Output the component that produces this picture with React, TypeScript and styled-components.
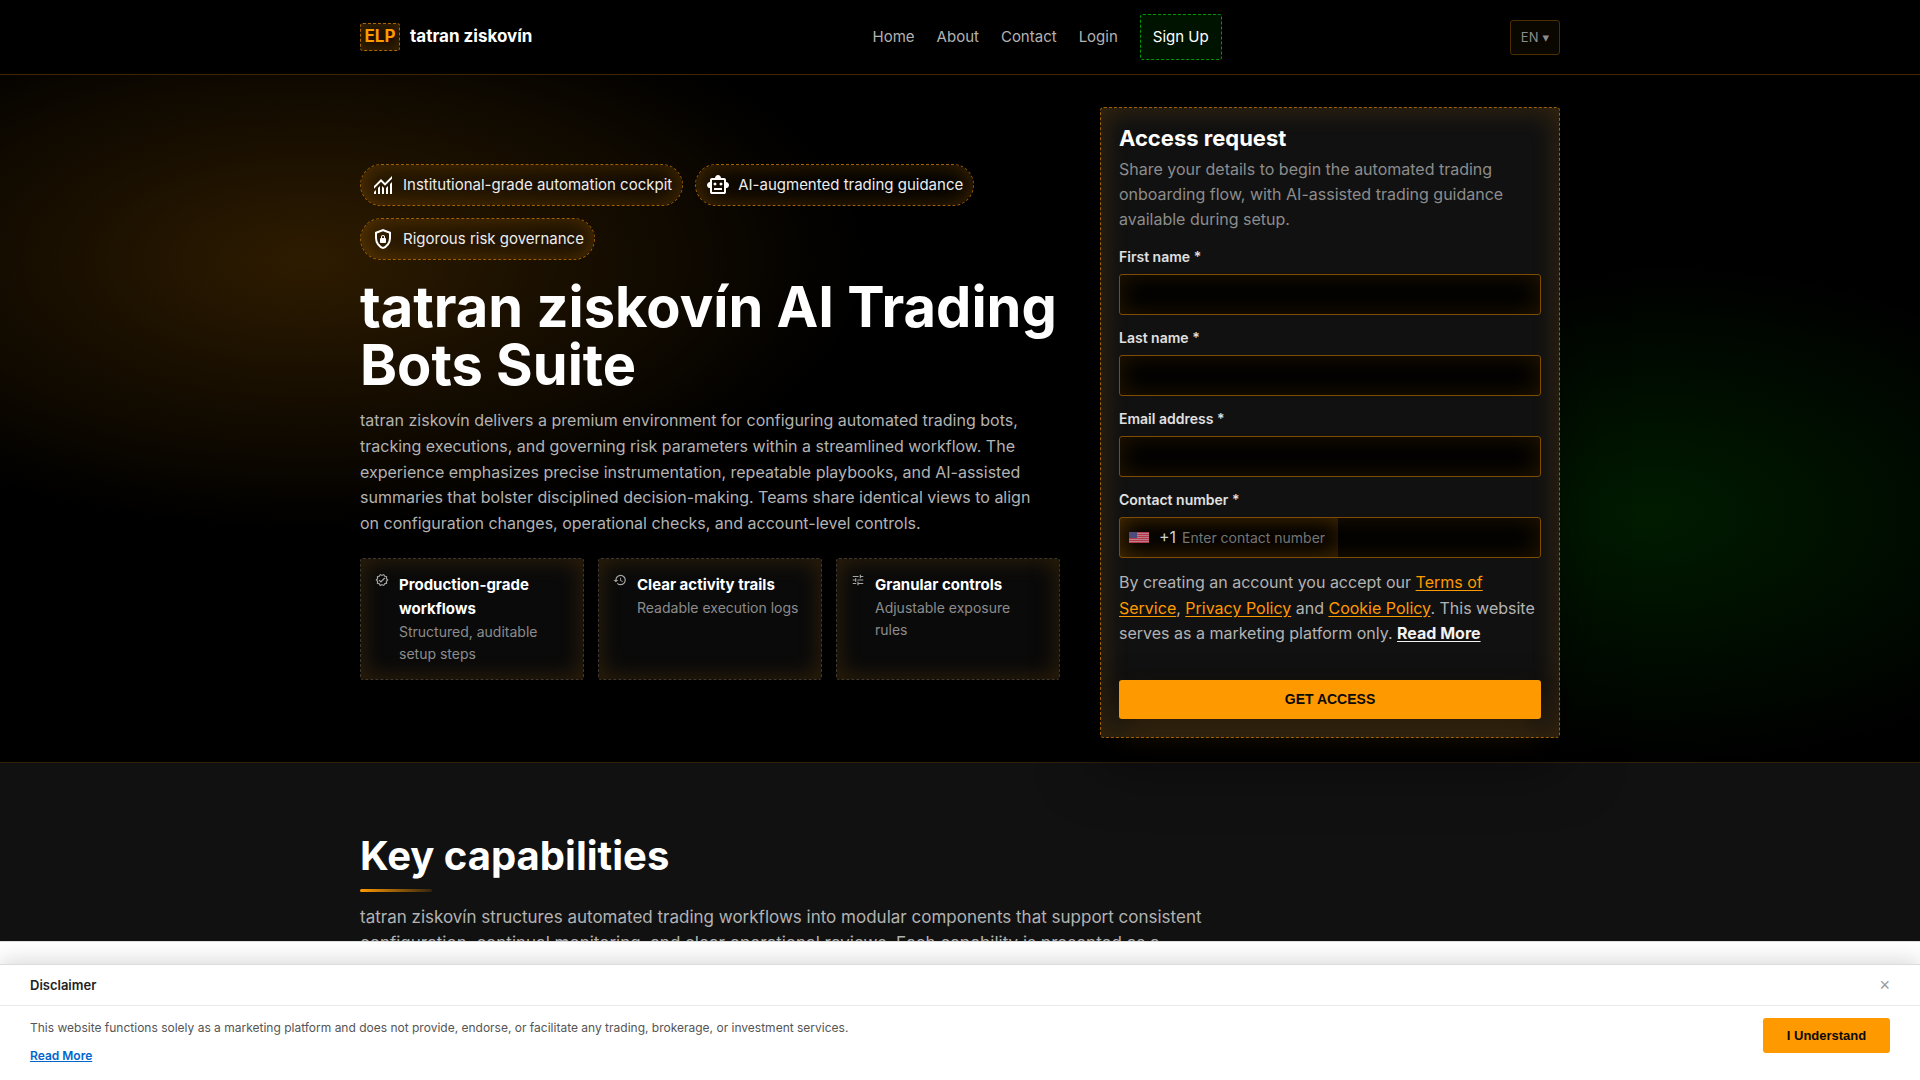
import React from "react";
import styled, { createGlobalStyle } from "styled-components";
import { MdHistory, MdOutlineVerified, MdTune } from "react-icons/md";

const GlobalStyle = createGlobalStyle`
  *, *::before, *::after { box-sizing: border-box; }
  body {
    margin: 0;
    background: #fff;
    color: #fff;
    font-family: Inter, "Liberation Sans", sans-serif;
    font-size: 16px;
    line-height: 1.6;
  }
  h1, h2, h3, p { margin: 0; }
`;

const Shell = styled.div`
  display: flex;
  flex-direction: column;
  height: 100vh;
`;

const Page = styled.div`
  flex: 1;
  min-height: 0;
  overflow: hidden auto;
  scrollbar-width: none;
  background: #111;
`;

const Container = styled.div`
  width: 100%;
  max-width: 1248px;
  margin: 0 auto;
  padding: 0 24px;
`;

const Header = styled.header`
  padding: 14px 0;
  background: #000;
  border-bottom: 1px solid #402600;
`;

const HeaderRow = styled(Container)`
  display: flex;
  align-items: center;
  justify-content: space-between;
`;

const Brand = styled.a`
  display: flex;
  align-items: center;
  gap: 10px;
  color: #fff;
  font-size: 17px;
  font-weight: 700;
  text-decoration: none;
`;

const BrandMark = styled.span`
  display: flex;
  align-items: center;
  justify-content: center;
  width: 40px;
  height: 28px;
  border: 1px dashed #a86500;
  border-radius: 3px;
  background: #1c1100;
  box-shadow: inset 0 0 12px rgba(255, 153, 0, 0.16);
  color: #f90;
`;

const Nav = styled.nav`
  display: flex;
  align-items: center;
  gap: 22px;
  margin-left: 52px;
`;

const NavLink = styled.a<{ $accent?: boolean }>`
  display: flex;
  align-items: center;
  height: 46px;
  padding: ${(p) => (p.$accent ? "0 12px" : "0")};
  border: ${(p) => (p.$accent ? "1px dashed #009a00" : "0")};
  border-radius: 3px;
  background: ${(p) => (p.$accent ? "#001200" : "transparent")};
  color: ${(p) => (p.$accent ? "#fff" : "#b3b3b3")};
  font-size: 15px;
  text-decoration: none;
`;

const Language = styled.button`
  display: flex;
  align-items: center;
  gap: 4px;
  height: 35px;
  padding: 0 10px;
  border: 1px solid #4d2e00;
  border-radius: 3px;
  background: #0a0600;
  color: #8c8c8c;
  font: 13px Inter, sans-serif;
`;

const Caret = styled.span`
  font-family: "DejaVu Sans", sans-serif;
  font-size: 13px;
`;

const Hero = styled.section`
  padding: 32px 0 24px;
  border-bottom: 1px solid #33220a;
  background:
    radial-gradient(ellipse 560px 270px at 16% 27%, rgba(255, 153, 0, 0.18), transparent),
    radial-gradient(ellipse 460px 250px at 86% 64%, rgba(0, 153, 0, 0.18), transparent),
    #000;
`;

const HeroGrid = styled(Container)`
  display: grid;
  grid-template-columns: minmax(0, 700fr) minmax(0, 460fr);
  gap: 40px;
  align-items: center;
`;

const Chips = styled.ul`
  display: flex;
  flex-wrap: wrap;
  gap: 12px;
  margin: 0 0 18px;
  padding: 0;
  list-style: none;
`;

const Chip = styled.li`
  display: flex;
  align-items: center;
  gap: 8px;
  height: 42px;
  padding: 0 10px;
  border: 1px dashed #a06000;
  border-radius: 21px;
  box-shadow: inset 0 0 24px rgba(255, 153, 0, 0.26);
  color: #ededed;
  font-size: 15px;

  svg {
    width: 24px;
    height: 24px;
    fill: #fff;
  }
`;

const HeroTitle = styled.h1`
  font-size: 56px;
  font-weight: 700;
  line-height: 58px;
`;

const Lead = styled.p`
  max-width: 690px;
  margin-top: 14px;
  color: #b3b3b3;
  font-size: 16px;
`;

const Features = styled.div`
  display: grid;
  grid-template-columns: repeat(3, minmax(0, 1fr));
  gap: 14px;
  margin-top: 22px;
`;

const Feature = styled.article`
  display: flex;
  gap: 10px;
  padding: 14px;
  border: 1px dashed #40382d;
  border-radius: 3px;
  background: #0a0a0a;
  box-shadow: inset 0 0 24px rgba(255, 153, 0, 0.16);

  > svg {
    flex: none;
    width: 14px;
    height: 14px;
    color: #a6a6a6;
  }
`;

const FeatureTitle = styled.h3`
  font-size: 15px;
  font-weight: 700;
  line-height: 24px;
`;

const FeatureText = styled.p`
  color: #8c8c8c;
  font-size: 14px;
  line-height: 22px;
`;

const Card = styled.form`
  display: flex;
  flex-direction: column;
  padding: 18px;
  border: 1px dashed #a06000;
  border-radius: 4px;
  background: #111;
  box-shadow:
    0 24px 60px rgba(0, 0, 0, 0.5),
    inset 0 0 28px rgba(255, 153, 0, 0.18);
`;

const CardTitle = styled.h2`
  font-size: 22px;
  font-weight: 700;
  line-height: 24px;
`;

const CardText = styled.p`
  margin: 7px 0 14px;
  color: #8c8c8c;
  font-size: 16px;
  line-height: 25px;
`;

const Field = styled.div`
  display: flex;
  flex-direction: column;
  gap: 7px;
  margin-bottom: 12px;
`;

const Label = styled.label`
  color: #e0e0e0;
  font-size: 14px;
  font-weight: 600;
  line-height: 21px;
`;

const Input = styled.input`
  width: 100%;
  height: 41px;
  padding: 0 12px;
  border: 1px solid #804d00;
  border-radius: 3px;
  outline: 0;
  background: #000;
  box-shadow: inset 0 0 24px rgba(255, 153, 0, 0.14);
  color: #fff;
  font: 14px Inter, sans-serif;
`;

const PhoneBox = styled.div`
  display: flex;
  height: 41px;
  border: 1px solid #804d00;
  border-radius: 3px;
  background: #000;
  box-shadow: inset 0 0 24px rgba(255, 153, 0, 0.14);
`;

const PhoneEntry = styled.div`
  display: flex;
  align-items: center;
  width: 52%;
  padding-left: 9px;
  box-shadow: inset 0 0 24px rgba(255, 153, 0, 0.2);

  svg {
    flex: none;
    width: 20px;
    height: 11px;
    opacity: 0.8;
  }
`;

const DialCode = styled.span`
  margin: 0 6px 0 10px;
  color: #d0d0d0;
  font-size: 16px;
`;

const PhoneInput = styled.input`
  flex: 1;
  min-width: 0;
  padding: 0;
  border: 0;
  outline: 0;
  background: transparent;
  color: #fff;
  font: 14px Inter, sans-serif;

  &::placeholder { color: #757575; }
`;

const Terms = styled.p`
  color: #b3b3b3;
  font-size: 16px;

  a { color: #f90; text-underline-offset: 2px; }
  a:last-child { color: #f2f2f2; font-weight: 700; }
`;

const Submit = styled.button`
  height: 39px;
  margin-top: 33px;
  border: 0;
  border-radius: 3px;
  background: #f90;
  box-shadow:
    0 14px 30px rgba(255, 153, 0, 0.14),
    0 0 24px rgba(0, 0, 0, 0.35);
  color: #0a0a0a;
  font: 700 14px "Liberation Sans", Arial, sans-serif;
  text-transform: uppercase;
`;

const Capabilities = styled.section`
  padding: 68px 0 80px;
`;

const SectionTitle = styled.h2`
  font-size: 40px;
  font-weight: 700;
  line-height: 50px;

  &::after {
    content: "";
    display: block;
    width: 72px;
    height: 3px;
    margin-top: 8px;
    border-radius: 2px;
    background: linear-gradient(90deg, #f90, rgba(255, 153, 0, 0.15));
  }
`;

const SectionLead = styled.p`
  max-width: 860px;
  margin-top: 12px;
  color: #b3b3b3;
  font-size: 17px;
  line-height: 26px;
`;

const NoticeArea = styled.div`
  padding-top: 22px;
  border-top: 1px solid #ddd;
  background: #fff;
`;

const Notice = styled.aside`
  border-top: 1px solid #ddd;
  box-shadow: 0 -4px 20px rgba(0, 0, 0, 0.15);
  background: #fff;
  color: #222;
  clip-path: inset(-22px 0 0);
`;

const NoticeHead = styled.div`
  display: flex;
  align-items: center;
  justify-content: space-between;
  height: 41px;
  padding: 0 30px;
  border-bottom: 1px solid #e9e9e9;
`;

const NoticeTitle = styled.h2`
  font-size: 13px;
  font-weight: 600;
`;

const Close = styled.button`
  padding: 0;
  border: 0;
  background: transparent;
  color: #999;
  font: 18px "Liberation Sans", Arial, sans-serif;
`;

const NoticeBody = styled.div`
  display: flex;
  align-items: flex-start;
  justify-content: space-between;
  padding: 12px 30px 14px;
`;

const NoticeText = styled.div`
  color: #555;
  font-size: 12px;
  line-height: 20px;

  a {
    display: inline-block;
    margin-top: 8px;
    color: #0066cc;
    font-weight: 600;
  }
`;

const Accept = styled.button`
  width: 127px;
  height: 35px;
  border: 0;
  border-radius: 3px;
  background: #f90;
  color: #0a0a0a;
  font: 700 13px "Liberation Sans", Arial, sans-serif;
`;

const FinanceIcon = () => (
  <svg viewBox="0 0 24 24" aria-hidden="true">
    <path d="M3 21v-2l2-2v4zm4 0v-6l2-2v8zm4 0v-8l2 2.025V21zm4 0v-5.975l2-2V21zm4 0V11l2-2v12zM3 15.825V13l7-7l4 4l7-7v2.825l-7 7l-4-4z" />
  </svg>
);

const RobotIcon = () => (
  <svg viewBox="0 0 24 24" aria-hidden="true">
    <path
      fillRule="evenodd"
      d="M4 15q-1.25 0-2.125-.875T1 12t.875-2.125T4 9V7q0-.825.588-1.412T6 5h3q0-1.25.875-2.125T12 2t2.125.875T15 5h3q.825 0 1.413.588T20 7v2q1.25 0 2.125.875T23 12t-.875 2.125T20 15v4q0 .825-.587 1.413T18 21H6q-.825 0-1.412-.587T4 19zM6 19h12V7H6zM9 9.5q-.625 0-1.062.438T7.5 11t.438 1.063T9 12.5t1.063-.437T10.5 11t-.437-1.062T9 9.5M15 9.5q-.625 0-1.062.438T13.5 11t.438 1.063T15 12.5t1.063-.437T16.5 11t-.437-1.062T15 9.5M8 15v2h8v-2z"
    />
  </svg>
);

const ShieldIcon = () => (
  <svg viewBox="0 0 24 24" aria-hidden="true">
    <path
      fillRule="evenodd"
      d="M12 22q-3.475-.875-5.738-3.988T4 11.1V5l8-3l8 3v6.1q0 3.8-2.262 6.913T12 22m0-2.1q2.6-.825 4.3-3.3t1.7-5.5V6.375l-6-2.25l-6 2.25V11.1q0 3.025 1.7 5.5t4.3 3.3M10 16h4q.425 0 .713-.288T15 15v-3q0-.425-.288-.712T14 11v-1q0-.825-.587-1.412T12 8t-1.412.588T10 10v1q-.425 0-.712.288T9 12v3q0 .425.288.713T10 16m1-5v-1q0-.425.288-.712T12 9t.713.288T13 10v1z"
    />
  </svg>
);

const FlagIcon = () => (
  <svg viewBox="0 0 20 11" aria-hidden="true">
    <rect width="20" height="11" fill="#fff" />
    {[0, 2, 4, 6, 8, 10].map((y) => (
      <rect key={y} y={y} width="20" height="1.3" fill="#d9415a" />
    ))}
    <rect width="20" height="11" fill="#e2556b" opacity="0.4" />
    <rect width="8" height="6" fill="#5a5c9c" />
  </svg>
);

const chips = [
  { icon: <FinanceIcon />, text: "Institutional-grade automation cockpit" },
  { icon: <RobotIcon />, text: "AI-augmented trading guidance" },
  { icon: <ShieldIcon />, text: "Rigorous risk governance" },
];

const features = [
  { icon: <MdOutlineVerified />, title: "Production-grade workflows", text: "Structured, auditable setup steps" },
  { icon: <MdHistory />, title: "Clear activity trails", text: "Readable execution logs" },
  { icon: <MdTune />, title: "Granular controls", text: "Adjustable exposure rules" },
];

const fields = [
  { id: "first", label: "First name *", type: "text" },
  { id: "last", label: "Last name *", type: "text" },
  { id: "email", label: "Email address *", type: "email" },
];

export default function App() {
  return (
    <Shell>
      <GlobalStyle />
      <Page>
        <Header>
          <HeaderRow>
            <Brand href="#">
              <BrandMark>ELP</BrandMark>
              tatran ziskovín
            </Brand>
            <Nav>
              {["Home", "About", "Contact", "Login"].map((name) => (
                <NavLink key={name} href="#">{name}</NavLink>
              ))}
              <NavLink href="#" $accent>Sign Up</NavLink>
            </Nav>
            <Language type="button">
              EN <Caret>▾</Caret>
            </Language>
          </HeaderRow>
        </Header>

        <Hero>
          <HeroGrid>
            <div>
              <Chips>
                {chips.map((c) => (
                  <Chip key={c.text}>{c.icon}{c.text}</Chip>
                ))}
              </Chips>
              <HeroTitle>tatran ziskovín AI Trading Bots Suite</HeroTitle>
              <Lead>
                tatran ziskovín delivers a premium environment for configuring automated trading bots, tracking
                executions, and governing risk parameters within a streamlined workflow. The experience emphasizes
                precise instrumentation, repeatable playbooks, and AI-assisted summaries that bolster disciplined
                decision-making. Teams share identical views to align on configuration changes, operational checks,
                and account-level controls.
              </Lead>
              <Features>
                {features.map((f) => (
                  <Feature key={f.title}>
                    {f.icon}
                    <div>
                      <FeatureTitle>{f.title}</FeatureTitle>
                      <FeatureText>{f.text}</FeatureText>
                    </div>
                  </Feature>
                ))}
              </Features>
            </div>

            <Card>
              <CardTitle>Access request</CardTitle>
              <CardText>
                Share your details to begin the automated trading onboarding flow, with AI-assisted trading guidance
                available during setup.
              </CardText>
              {fields.map((f) => (
                <Field key={f.id}>
                  <Label htmlFor={f.id}>{f.label}</Label>
                  <Input id={f.id} type={f.type} />
                </Field>
              ))}
              <Field>
                <Label htmlFor="phone">Contact number *</Label>
                <PhoneBox>
                  <PhoneEntry>
                    <FlagIcon />
                    <DialCode>+1</DialCode>
                    <PhoneInput id="phone" type="tel" placeholder="Enter contact number" />
                  </PhoneEntry>
                </PhoneBox>
              </Field>
              <Terms>
                By creating an account you accept our <a href="#">Terms of Service</a>, <a href="#">Privacy Policy</a>{" "}
                and <a href="#">Cookie Policy</a>. This website serves as a marketing platform only.{" "}
                <a href="#">Read More</a>
              </Terms>
              <Submit type="button">Get access</Submit>
            </Card>
          </HeroGrid>
        </Hero>

        <Capabilities>
          <Container>
            <SectionTitle>Key capabilities</SectionTitle>
            <SectionLead>
              tatran ziskovín structures automated trading workflows into modular components that support consistent
              configuration, continual monitoring, and clear operational reviews. Each capability is presented as a
            </SectionLead>
          </Container>
        </Capabilities>
      </Page>

      <NoticeArea>
        <Notice>
          <NoticeHead>
            <NoticeTitle>Disclaimer</NoticeTitle>
            <Close type="button" aria-label="Close">×</Close>
          </NoticeHead>
          <NoticeBody>
            <NoticeText>
              <p>
                This website functions solely as a marketing platform and does not provide, endorse, or facilitate any
                trading, brokerage, or investment services.
              </p>
              <a href="#">Read More</a>
            </NoticeText>
            <Accept type="button">I Understand</Accept>
          </NoticeBody>
        </Notice>
      </NoticeArea>
    </Shell>
  );
}
